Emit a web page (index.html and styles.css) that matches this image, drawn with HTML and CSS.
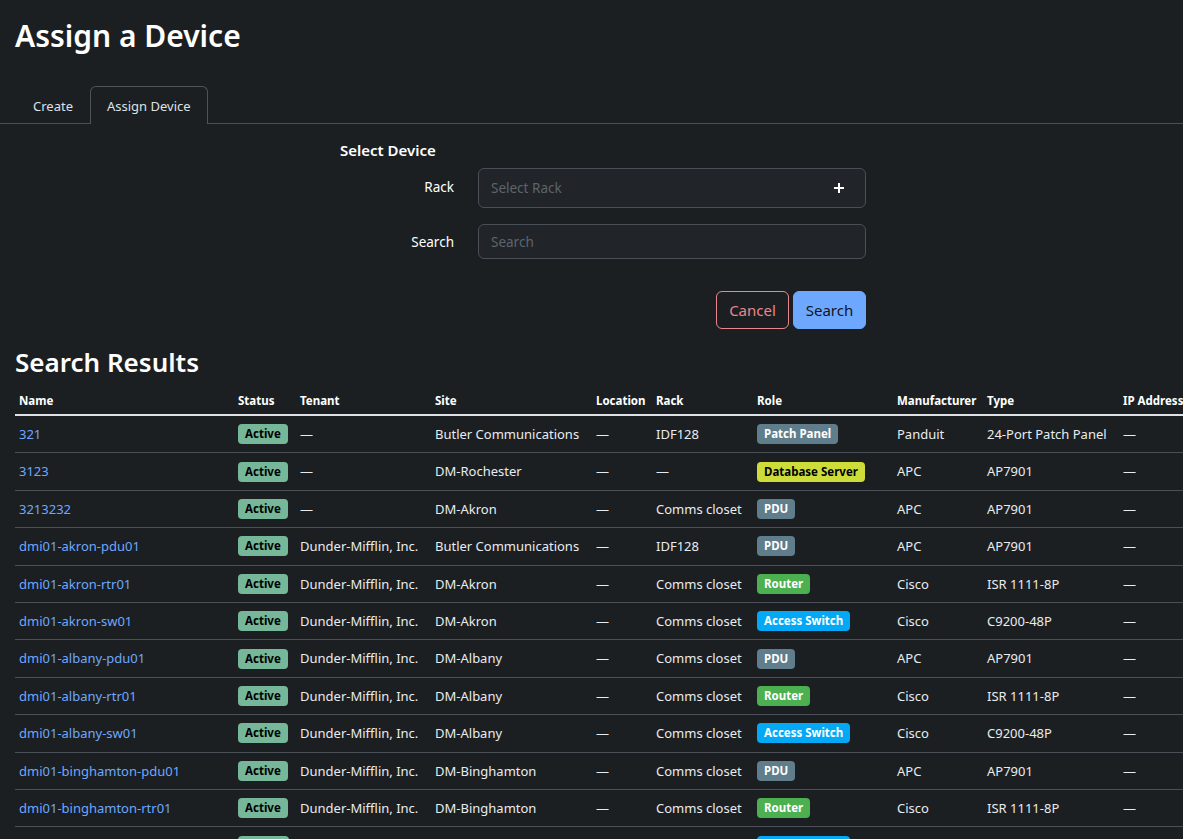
FILE: index.html
```html
<!DOCTYPE html>
<html lang="en">
<head>
<meta charset="utf-8">
<title>Assign a Device</title>
<link rel="stylesheet" href="styles.css">
</head>
<body>
<header class="page-header">
  <h1 class="page-title">Assign a Device</h1>
</header>
<nav class="tabs">
  <a class="tab">Create</a>
  <a class="tab active">Assign Device</a>
</nav>
<main class="content">
  <section class="form">
    <h2 class="form-title">Select Device</h2>
    <div class="field">
      <label class="field-label">Rack</label>
      <div class="select-box">
        <span class="placeholder">Select Rack</span>
        <svg class="plus" width="12" height="12" viewBox="0 0 12 12"><path d="M6 1v10M1 6h10" stroke="#fff" stroke-width="2" fill="none"/></svg>
      </div>
    </div>
    <div class="field field-search">
      <label class="field-label">Search</label>
      <div class="text-box"><span class="placeholder">Search</span></div>
    </div>
    <div class="actions">
      <button class="btn btn-cancel">Cancel</button>
      <button class="btn btn-search">Search</button>
    </div>
  </section>
  <h2 class="results-title">Search Results</h2>
  <table class="results">
    <colgroup>
      <col class="c-name"><col class="c-status"><col class="c-tenant"><col class="c-site"><col class="c-loc"><col class="c-rack"><col class="c-role"><col class="c-mfr"><col class="c-type"><col class="c-ip">
    </colgroup>
    <thead>
      <tr><th>Name</th><th>Status</th><th>Tenant</th><th>Site</th><th>Location</th><th>Rack</th><th>Role</th><th>Manufacturer</th><th>Type</th><th>IP Address</th></tr>
    </thead>
    <tbody>
      <tr><td><a>321</a></td><td><span class="badge b-active">Active</span></td><td>—</td><td>Butler Communications</td><td>—</td><td>IDF128</td><td><span class="badge b-grey">Patch Panel</span></td><td>Panduit</td><td>24-Port Patch Panel</td><td>—</td></tr>
      <tr><td><a>3123</a></td><td><span class="badge b-active">Active</span></td><td>—</td><td>DM-Rochester</td><td>—</td><td>—</td><td><span class="badge b-lime">Database Server</span></td><td>APC</td><td>AP7901</td><td>—</td></tr>
      <tr><td><a>3213232</a></td><td><span class="badge b-active">Active</span></td><td>—</td><td>DM-Akron</td><td>—</td><td>Comms closet</td><td><span class="badge b-grey">PDU</span></td><td>APC</td><td>AP7901</td><td>—</td></tr>
      <tr><td><a>dmi01-akron-pdu01</a></td><td><span class="badge b-active">Active</span></td><td>Dunder-Mifflin, Inc.</td><td>Butler Communications</td><td>—</td><td>IDF128</td><td><span class="badge b-grey">PDU</span></td><td>APC</td><td>AP7901</td><td>—</td></tr>
      <tr><td><a>dmi01-akron-rtr01</a></td><td><span class="badge b-active">Active</span></td><td>Dunder-Mifflin, Inc.</td><td>DM-Akron</td><td>—</td><td>Comms closet</td><td><span class="badge b-green">Router</span></td><td>Cisco</td><td>ISR 1111-8P</td><td>—</td></tr>
      <tr><td><a>dmi01-akron-sw01</a></td><td><span class="badge b-active">Active</span></td><td>Dunder-Mifflin, Inc.</td><td>DM-Akron</td><td>—</td><td>Comms closet</td><td><span class="badge b-blue">Access Switch</span></td><td>Cisco</td><td>C9200-48P</td><td>—</td></tr>
      <tr><td><a>dmi01-albany-pdu01</a></td><td><span class="badge b-active">Active</span></td><td>Dunder-Mifflin, Inc.</td><td>DM-Albany</td><td>—</td><td>Comms closet</td><td><span class="badge b-grey">PDU</span></td><td>APC</td><td>AP7901</td><td>—</td></tr>
      <tr><td><a>dmi01-albany-rtr01</a></td><td><span class="badge b-active">Active</span></td><td>Dunder-Mifflin, Inc.</td><td>DM-Albany</td><td>—</td><td>Comms closet</td><td><span class="badge b-green">Router</span></td><td>Cisco</td><td>ISR 1111-8P</td><td>—</td></tr>
      <tr><td><a>dmi01-albany-sw01</a></td><td><span class="badge b-active">Active</span></td><td>Dunder-Mifflin, Inc.</td><td>DM-Albany</td><td>—</td><td>Comms closet</td><td><span class="badge b-blue">Access Switch</span></td><td>Cisco</td><td>C9200-48P</td><td>—</td></tr>
      <tr><td><a>dmi01-binghamton-pdu01</a></td><td><span class="badge b-active">Active</span></td><td>Dunder-Mifflin, Inc.</td><td>DM-Binghamton</td><td>—</td><td>Comms closet</td><td><span class="badge b-grey">PDU</span></td><td>APC</td><td>AP7901</td><td>—</td></tr>
      <tr><td><a>dmi01-binghamton-rtr01</a></td><td><span class="badge b-active">Active</span></td><td>Dunder-Mifflin, Inc.</td><td>DM-Binghamton</td><td>—</td><td>Comms closet</td><td><span class="badge b-green">Router</span></td><td>Cisco</td><td>ISR 1111-8P</td><td>—</td></tr>
      <tr class="row-partial"><td></td><td><span class="badge b-active"></span></td><td></td><td></td><td></td><td></td><td><span class="badge b-blue b-wide"></span></td><td></td><td></td><td></td></tr>
    </tbody>
  </table>
</main>
</body>
</html>
```
FILE: styles.css
```css
html, body {
  margin: 0;
  padding: 0;
}
body {
  background: #1b1f22;
  color: #dee2e6;
  font-family: "Noto Sans", "Open Sans", sans-serif;
  font-size: 13px;
  overflow: hidden;
  height: 839px;
}
.page-header {
  height: 86px;
  box-sizing: border-box;
  padding: 16px 15px 0;
}
.page-title {
  margin: 0;
  font-size: 30px;
  font-weight: 600;
  line-height: 40px;
  color: #fff;
}
.tabs {
  display: flex;
  padding-left: 16px;
  border-bottom: 1px solid #495057;
}
.tab {
  display: block;
  height: 36px;
  line-height: 38px;
  padding: 0 16px;
  border: 1px solid transparent;
  border-bottom: 0;
  border-radius: 6px 6px 0 0;
  color: #dee2e6;
  font-size: 13px;
  margin-bottom: -1px;
}
.tab.active {
  border-color: #4d545b;
  background: #1b1f22;
  height: 37px;
}
.content {
  padding: 0 15px;
}
.form {
  width: 526px;
  margin-left: 325px;
  padding-top: 15px;
}
.form-title {
  margin: 0 0 7px;
  font-size: 15px;
  font-weight: 600;
  line-height: 22px;
  color: #fff;
}
.field {
  display: grid;
  grid-template-columns: 114px 388px;
  column-gap: 24px;
  align-items: center;
  margin-bottom: 16px;
}
.field-label {
  text-align: right;
  font-size: 13.5px;
  line-height: 18px;
  color: #fff;
  padding-bottom: 3px;
}
.field-search .field-label {
  padding-bottom: 0;
}
.select-box, .text-box {
  box-sizing: border-box;
  display: flex;
  align-items: center;
  justify-content: space-between;
  background: #212529;
  border: 1px solid #495057;
  border-radius: 6px;
  padding: 0 20px 0 12px;
}
.select-box {
  height: 40px;
}
.text-box {
  height: 35px;
}
.placeholder {
  color: #5d646b;
  font-size: 13.5px;
}
.plus {
  display: block;
}
.field-search {
  margin-bottom: 32px;
}
.actions {
  display: flex;
  justify-content: flex-end;
  gap: 4px;
}
.btn {
  box-sizing: border-box;
  height: 38px;
  width: 73px;
  border-radius: 6px;
  font-family: inherit;
  font-size: 15px;
  padding: 0;
  cursor: pointer;
}
.btn-cancel {
  background: transparent;
  border: 1px solid #ea868f;
  color: #ea868f;
}
.btn-search {
  background: #6ea8fe;
  border: 1px solid #6ea8fe;
  color: #10151c;
}
.results-title {
  margin: 16px 0 6px;
  font-size: 26px;
  font-weight: 600;
  line-height: 34px;
  color: #fff;
}
.results {
  border-collapse: collapse;
  table-layout: fixed;
  width: 1220px;
}
.c-name { width: 219px; }
.c-status { width: 62px; }
.c-tenant { width: 135px; }
.c-site { width: 161px; }
.c-loc { width: 60px; }
.c-rack { width: 101px; }
.c-role { width: 140px; }
.c-mfr { width: 90px; }
.c-type { width: 136px; }
.c-ip { width: 116px; }
.results th {
  text-align: left;
  font-size: 11.5px;
  font-weight: 700;
  color: #fff;
  padding: 7px 4px 4px;
  line-height: 18px;
  border-bottom: 2px solid #dee2e6;
  white-space: nowrap;
  overflow: hidden;
}
.results td {
  padding: 8px 4px;
  height: 20px;
  line-height: 20.4px;
  border-bottom: 1px solid #495057;
  white-space: nowrap;
  color: #e9ecef;
}
.results a {
  color: #6ea8fe;
  text-decoration: none;
}
.badge {
  display: inline-block;
  vertical-align: top;
  height: 20px;
  line-height: 20px;
  margin-top: 0.2px;
  padding: 0 7px;
  border-radius: 4px;
  font-size: 11.5px;
  font-weight: 700;
}
.b-active { background: #75b798; color: #000; }
.b-grey { background: #607d8b; color: #fff; }
.b-lime { background: #cddc39; color: #000; }
.b-green { background: #4caf50; color: #fff; }
.b-blue { background: #03a9f4; color: #fff; }
.row-partial .b-active { width: 37px; }
.row-partial .b-wide { width: 79px; }
```
